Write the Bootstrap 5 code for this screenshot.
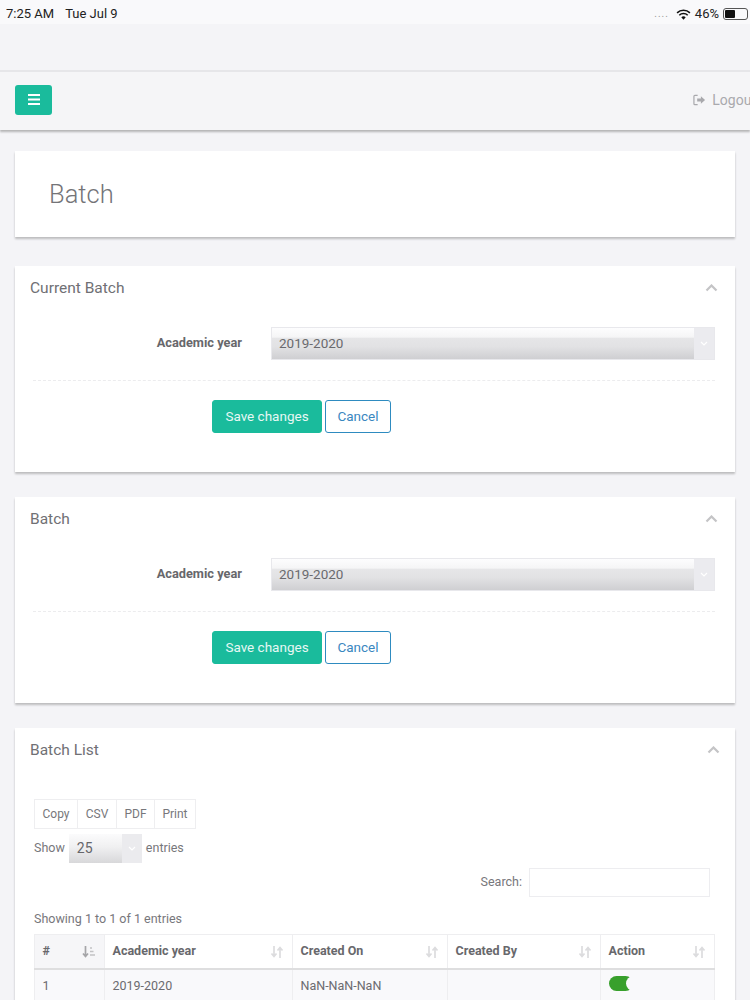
<!DOCTYPE html>
<html lang="en">
<head>
<meta charset="utf-8">
<title>Batch</title>
<link href="https://cdn.jsdelivr.net/npm/bootstrap@5.3.0/dist/css/bootstrap.min.css" rel="stylesheet">
<style>
html,body{height:1000px;overflow:hidden}
body{background:#f4f4f7;font-family:Roboto,"Liberation Sans",sans-serif;font-size:13px;color:#6c6c70}
.stat-bar{height:24px;background:#f9f9fb;padding:4px 0 0 6px;color:#222;font-size:13px;line-height:20px}
.stat-bar .dots{color:#999;font-size:10px;letter-spacing:1px;margin-right:3px}
.time-gap{margin-left:11px}
.batt{width:25px;height:12px;border:1px solid #555;border-radius:3px;padding:1px;margin-right:2px}
.batt i{display:block;width:46%;height:100%;background:#111;border-radius:1px}
.gap-top{height:46px}
.top-nav{height:60px;border-top:2px solid #e6e6e9;box-shadow:0 2px 2px #b4b4b6;background:#f5f5f7;padding:0 15px;margin-bottom:21px;overflow:hidden}
.menu-btn{width:37px;height:30px;background:#1abb9c;border-radius:3px;padding:0;margin-top:-3px}
.logout{color:#a9a9ad;font-size:14px;white-space:nowrap;flex:none;margin-right:-21px;gap:6px;margin-bottom:2px}
.wrap{padding:0 15px}
.pane{background:#fff;box-shadow:0 2px 2px #bcbcbe;border:0;border-radius:0}
.pane-head{height:86px;padding-left:34px;margin-bottom:29px}
.pane-head h1{font-size:25.500px;font-weight:300;color:#747478;margin:0}
.pane-form{height:206px;margin-bottom:25px;padding:12px 20px 0 15px}
.pane-list{height:400px;padding:12px 19px 0 19px}
.pane-title{font-size:15.500px;font-weight:400;color:#707074;line-height:20px;margin:0}
.chev{margin-right:-3px}
.list-title{margin-left:-4px}
.list-chev{margin-right:-4px}
.fld-row{margin-top:29px}
.fld-label{width:212px;text-align:right;font-weight:700;font-size:12.800px;color:#67676b;margin:0 29px 0 0;padding-bottom:2px}
.ios-select{flex:1;height:33px;background:linear-gradient(#fdfdfe 0,#f5f5f6 30%,#e6e6e8 32%,#e2e2e4 60%,#cfcfd2 100%);border:1px solid #e8e8ec;font-size:13.500px;color:#6a6a6e;padding:0 0 0 7px;line-height:31px;position:relative}
.ios-arrow{position:absolute;right:0;top:0;bottom:0;width:20px;background:#ebebef;display:flex;align-items:center;justify-content:center}
.dash-line{border-top:1px dashed #ececee;margin:20px 0 19px 3px}
.btn-row{padding-left:182px;gap:3px}
.btn-save,.btn-cancel{height:33px;font-size:13.500px;border-radius:3px;padding:0;line-height:31px}
.btn-save{width:110px;background:#1abb9c;border:1px solid #1abb9c;color:#e6f8f4}
.btn-cancel{width:66px;background:#fff;border:1px solid #2e8bc0;color:#3a87bf}
.dt-btns{margin-top:39px;width:162px;height:30px;border:1px solid #eeeef0;font-size:12px;color:#77777b}
.dt-btns span{flex:none;line-height:28px;text-align:center;border-right:1px solid #eeeef0}
.dt-btns span:last-child{border:0}
.dt-copy{width:43px}
.dt-csv{width:39px}
.dt-pdf{width:38px}
.dt-print{width:40px}
.len-row{margin-top:5px;height:29px;color:#77777b;font-size:12.500px;gap:4px}
.len-sel{width:73px;height:29px;background:linear-gradient(#fbfbfc 0,#f0f0f1 45%,#d8d8da 100%);font-size:14px;color:#66666a;padding-left:8px;line-height:28px;position:relative}
.len-sel b{position:absolute;right:0;top:0;bottom:0;width:20px;background:#ebebee;display:flex;align-items:center;justify-content:center}
.search-row{margin-top:4px;height:30px;color:#77777b;font-size:12.500px;gap:7px;padding-right:6px}
.search-box{width:181px;height:29px;border:1px solid #ededf0;background:#fff}
.info-line{margin-top:14px;height:16px;line-height:16px;font-size:12.500px;color:#77777b}
.grid-tbl{table-layout:fixed;width:680px;margin:7px 0 0 0;border-collapse:collapse;font-size:12.500px;color:#6b6b6f}
.grid-tbl th,.grid-tbl td{border:1px solid #eeeef0;padding:0 8px 0 7.500px;vertical-align:middle;position:relative;background:#fff}
.grid-tbl th{height:34px;font-weight:700;color:#68686c;border-bottom:2px solid #dededf}
.grid-tbl th.sorted{background:#f6f6f8}
.grid-tbl td{height:36px;background:#f9f9fb}
.sort-ic{position:absolute;right:8px;top:11px}
.c1{width:70px}
.c2{width:188px}
.c3{width:155px}
.c4{width:153px}
.c5{width:114px}
.tgl{display:block;width:24px;height:15px;border-radius:8px;background:#38a02c;position:relative;margin-bottom:6px}
.tgl::after{content:"";position:absolute;right:-1px;top:0;width:8px;height:15px;border-radius:8px 0 0 8px;background:#f9f9fb}
</style>
</head>
<body>
<div class="stat-bar d-flex justify-content-between">
  <div>7:25 AM<span class="time-gap">Tue Jul 9</span></div>
  <div class="d-flex align-items-center gap-1">
    <span class="dots">....</span>
    <svg width="15" height="11" viewBox="0 0 16 12"><path d="M1 4.200a10 10 0 0 1 14 0" fill="none" stroke="#111" stroke-width="1.700"/><path d="M3.400 6.800a6.600 6.600 0 0 1 9.200 0" fill="none" stroke="#111" stroke-width="1.700"/><path d="M5.600 9a3.400 3.400 0 0 1 4.800 0L8 11.600z" fill="#111"/></svg>
    <span>46%</span>
    <span class="batt"><i></i></span>
  </div>
</div>
<div class="gap-top"></div>
<nav class="top-nav d-flex align-items-center justify-content-between">
  <button class="btn menu-btn d-flex align-items-center justify-content-center" type="button" aria-label="Menu">
    <svg width="12" height="11" viewBox="0 0 12 11"><path d="M0 1h12M0 5.500h12M0 10h12" stroke="#fff" stroke-width="2"/></svg>
  </button>
  <span class="logout d-flex align-items-center">
    <svg width="13" height="12" viewBox="0 0 14 12"><path d="M5 1H2a1 1 0 0 0-1 1v8a1 1 0 0 0 1 1h3" fill="none" stroke="#a9a9ad" stroke-width="1.300"/><path d="M4.500 4.500h4V2l4.500 4-4.500 4V7.500h-4z" fill="#a9a9ad"/></svg>
    Logout
  </span>
</nav>
<main class="wrap">
  <div class="pane pane-head d-flex align-items-center"><h1>Batch</h1></div>

  <section class="pane pane-form">
    <div class="d-flex justify-content-between align-items-center"><h2 class="pane-title">Current Batch</h2>
      <svg class="chev" width="13" height="8" viewBox="0 0 13 8"><path d="M1.500 6.500l5-5 5 5" fill="none" stroke="#c4c4c6" stroke-width="2.200"/></svg></div>
    <div class="fld-row d-flex align-items-center">
      <label class="fld-label">Academic year</label>
      <div class="ios-select">2019-2020<span class="ios-arrow"><svg width="8" height="5" viewBox="0 0 8 5"><path d="M1 1l3 3 3-3" fill="none" stroke="#fff" stroke-width="1.200"/></svg></span></div>
    </div>
    <div class="dash-line"></div>
    <div class="btn-row d-flex">
      <button class="btn btn-save" type="button">Save changes</button>
      <button class="btn btn-cancel" type="button">Cancel</button>
    </div>
  </section>

  <section class="pane pane-form">
    <div class="d-flex justify-content-between align-items-center"><h2 class="pane-title">Batch</h2>
      <svg class="chev" width="13" height="8" viewBox="0 0 13 8"><path d="M1.500 6.500l5-5 5 5" fill="none" stroke="#c4c4c6" stroke-width="2.200"/></svg></div>
    <div class="fld-row d-flex align-items-center">
      <label class="fld-label">Academic year</label>
      <div class="ios-select">2019-2020<span class="ios-arrow"><svg width="8" height="5" viewBox="0 0 8 5"><path d="M1 1l3 3 3-3" fill="none" stroke="#fff" stroke-width="1.200"/></svg></span></div>
    </div>
    <div class="dash-line"></div>
    <div class="btn-row d-flex">
      <button class="btn btn-save" type="button">Save changes</button>
      <button class="btn btn-cancel" type="button">Cancel</button>
    </div>
  </section>

  <section class="pane pane-list">
    <div class="d-flex justify-content-between align-items-center"><h2 class="pane-title list-title">Batch List</h2>
      <svg class="chev list-chev" width="13" height="8" viewBox="0 0 13 8"><path d="M1.500 6.500l5-5 5 5" fill="none" stroke="#c4c4c6" stroke-width="2.200"/></svg></div>
    <div class="dt-btns d-flex">
      <span class="dt-copy">Copy</span><span class="dt-csv">CSV</span><span class="dt-pdf">PDF</span><span class="dt-print">Print</span>
    </div>
    <div class="len-row d-flex align-items-center">
      <span>Show</span><span class="len-sel">25<b><svg width="8" height="5" viewBox="0 0 8 5"><path d="M1 1l3 3 3-3" fill="none" stroke="#fff" stroke-width="1.200"/></svg></b></span><span>entries</span>
    </div>
    <div class="search-row d-flex align-items-center justify-content-end">
      <span>Search:</span><span class="search-box"></span>
    </div>
    <div class="info-line">Showing 1 to 1 of 1 entries</div>
    <table class="grid-tbl">
      <colgroup><col class="c1"><col class="c2"><col class="c3"><col class="c4"><col class="c5"></colgroup>
      <thead><tr>
        <th class="sorted">#<svg class="sort-ic" width="14" height="12" viewBox="0 0 14 12"><path d="M3.500 0v10M1 7.500l2.500 3 2.500-3" fill="none" stroke="#a5a5a8" stroke-width="1.700"/><path d="M8 2h2M8 5.500h3.500M8 9h5" stroke="#c2c2c4" stroke-width="1.600"/></svg></th>
        <th>Academic year<svg class="sort-ic" width="14" height="12" viewBox="0 0 14 12"><path d="M4 0v10M1.500 7.500l2.500 3 2.500-3M10 12V2M7.500 4.500l2.500-3 2.500 3" fill="none" stroke="#dcdcde" stroke-width="1.700"/></svg></th>
        <th>Created On<svg class="sort-ic" width="14" height="12" viewBox="0 0 14 12"><path d="M4 0v10M1.500 7.500l2.500 3 2.500-3M10 12V2M7.500 4.500l2.500-3 2.500 3" fill="none" stroke="#dcdcde" stroke-width="1.700"/></svg></th>
        <th>Created By<svg class="sort-ic" width="14" height="12" viewBox="0 0 14 12"><path d="M4 0v10M1.500 7.500l2.500 3 2.500-3M10 12V2M7.500 4.500l2.500-3 2.500 3" fill="none" stroke="#dcdcde" stroke-width="1.700"/></svg></th>
        <th>Action<svg class="sort-ic" width="14" height="12" viewBox="0 0 14 12"><path d="M4 0v10M1.500 7.500l2.500 3 2.500-3M10 12V2M7.500 4.500l2.500-3 2.500 3" fill="none" stroke="#dcdcde" stroke-width="1.700"/></svg></th>
      </tr></thead>
      <tbody><tr><td>1</td><td>2019-2020</td><td>NaN-NaN-NaN</td><td></td><td><span class="tgl"></span></td></tr></tbody>
    </table>
  </section>
</main>
</body>
</html>
